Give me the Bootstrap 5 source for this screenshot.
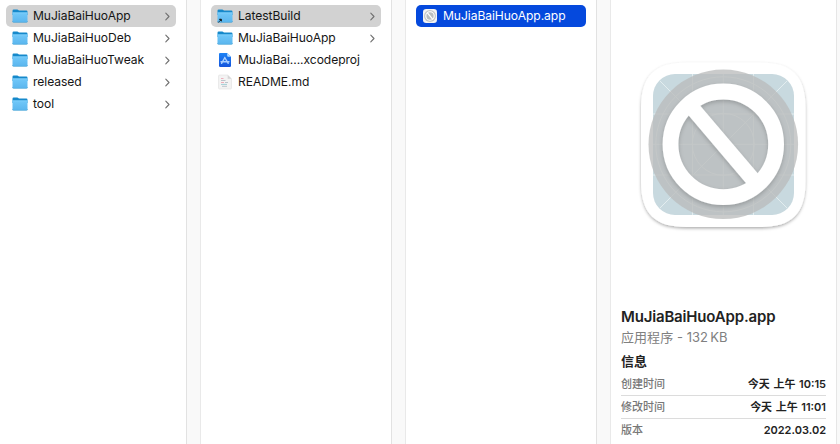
<!DOCTYPE html>
<html lang="zh-CN">
<head>
<meta charset="utf-8">
<meta name="viewport" content="width=device-width, initial-scale=1">
<title>MuJiaBaiHuoApp</title>
<link href="https://cdn.jsdelivr.net/npm/bootstrap@5.3.0/dist/css/bootstrap.min.css" rel="stylesheet">
<style>
body { font-family: Inter, "Noto Sans CJK SC", sans-serif; font-size: 13px; color: #222; background: #fff; }
.browser { height: 444px; width: 840px; }
.pane { background: #fff; width: 190px; padding-top: 5px; }
.pane-first { width: 186px; }
.pane-info { width: 225px; padding: 0 10px; }
.gutter { width: 15px; background: #f9f9f9; border-left: 1px solid #e2e2e2; border-right: 1px solid #e9e9e9; }
.edge { background: #f9f9f9; border-left: 1px solid #e6e6e6; }
.entry { width: 170px; height: 22px; color: #151515; font-size: 12.1px; line-height: 22px; margin-left: 10px; padding: 0 6px 0 5px; border-radius: 5px; letter-spacing: -.06px; white-space: nowrap; }
.pane-first .entry { margin-left: 6px; }
.entry.picked { background: #d2d2d2; }
.entry.active-file { background: #0549dd; color: #fff; }
.entry .glyph { width: 18px; height: 18px; margin-right: 4px; }
.chev { width: 6px; height: 9px; }
.preview { width: 190px; height: 190px; margin: 50px 0 0 9px; }
.file-name { font-size: 15px; font-weight: 600; line-height: 20px; margin-top: 67px; letter-spacing: -.17px; }
.file-kind { color: #808080; line-height: 20px; letter-spacing: .05px; }
.info-head { font-size: 13px; font-weight: 700; line-height: 20px; margin-top: 4px; }
.info-list { margin-top: 2px; }
.info-row { font-size: 11px; line-height: 22px; height: 23px; border-bottom: 1px solid #dcdcdc; }
.info-row:last-child { border: 0; }
.info-row dt { font-weight: 500; color: #777; }
.info-row dd { font-weight: 600; word-spacing: .8px; }
</style>
</head>
<body class="m-0 overflow-hidden">
<svg width="0" height="0" class="position-absolute" aria-hidden="true">
  <defs>
    <linearGradient id="folderFill" x2="0" y2="1"><stop stop-color="#71c8f9"/><stop offset="1" stop-color="#5bb6ee"/></linearGradient>
    <linearGradient id="projFill" x2="0" y2="1"><stop stop-color="#1d82f5"/><stop offset="1" stop-color="#1455dc"/></linearGradient>
    <filter id="softShadow" x="-10%" y="-10%" width="120%" height="125%"><feDropShadow dx="0" dy="1.5" stdDeviation="1.5" flood-opacity=".32"/></filter>
    <filter id="ringShadow" x="-10%" y="-10%" width="120%" height="125%"><feDropShadow dx="0" dy="2" stdDeviation="2" flood-opacity=".2"/></filter>
    <clipPath id="tileClip"><rect x="23" y="24" width="141" height="141" rx="22"/></clipPath>
    <symbol id="folder" viewBox="0 0 18 18">
      <path d="M1.500 3.700q0-1.200 1.200-1.200h3.600q.6 0 1 .5l.6.6h7.400q1.200 0 1.200 1.200V8h-15z" fill="#1689cb"/>
      <path d="M1.500 5.500h15v8.700q0 1-1 1h-13q-1 0-1-1z" fill="url(#folderFill)"/>
      <path d="M1.500 5.800h15" stroke="#91d8ff" stroke-width=".6"/>
      <path d="M1.500 14.200q0 1.200 1 1.200h13q1 0 1-1.200" fill="none" stroke="#3d9dd4" stroke-width=".6"/>
    </symbol>
    <symbol id="chevron" viewBox="0 0 6 9"><path d="M1.800 1.200l3.200 3.300-3.200 3.300" fill="none" stroke="#707070" stroke-width="1.100" stroke-linecap="round" stroke-linejoin="round"/></symbol>
  </defs>
</svg>

<main class="browser d-flex">
  <section class="pane pane-first flex-shrink-0">
    <div class="entry picked d-flex align-items-center"><svg class="glyph"><use href="#folder"/></svg><span>MuJiaBaiHuoApp</span><svg class="chev ms-auto"><use href="#chevron"/></svg></div>
    <div class="entry d-flex align-items-center"><svg class="glyph"><use href="#folder"/></svg><span>MuJiaBaiHuoDeb</span><svg class="chev ms-auto"><use href="#chevron"/></svg></div>
    <div class="entry d-flex align-items-center"><svg class="glyph"><use href="#folder"/></svg><span>MuJiaBaiHuoTweak</span><svg class="chev ms-auto"><use href="#chevron"/></svg></div>
    <div class="entry d-flex align-items-center"><svg class="glyph"><use href="#folder"/></svg><span>released</span><svg class="chev ms-auto"><use href="#chevron"/></svg></div>
    <div class="entry d-flex align-items-center"><svg class="glyph"><use href="#folder"/></svg><span>tool</span><svg class="chev ms-auto"><use href="#chevron"/></svg></div>
  </section>
  <div class="gutter flex-shrink-0"></div>
  <section class="pane flex-shrink-0">
    <div class="entry picked d-flex align-items-center"><svg class="glyph" viewBox="0 0 18 18"><use href="#folder" width="18" height="18"/><path d="M2.200 15.600L5 12.700M3.400 12.200h2v2z" fill="#111" stroke="#111" stroke-width=".8"/></svg><span>LatestBuild</span><svg class="chev ms-auto"><use href="#chevron"/></svg></div>
    <div class="entry d-flex align-items-center"><svg class="glyph"><use href="#folder"/></svg><span>MuJiaBaiHuoApp</span><svg class="chev ms-auto"><use href="#chevron"/></svg></div>
    <div class="entry d-flex align-items-center"><svg class="glyph" viewBox="0 0 18 18"><path d="M4 2h7.200L15 5.800v9q0 1.200-1.200 1.200H4.200Q3 16 3 14.800V3q0-1 1-1z" fill="url(#projFill)"/><path d="M11.200 2L15 5.800h-2.800q-1 0-1-1z" fill="#b5dcff"/><path d="M8.900 6.500l-3.300 5.800M8.700 6.500l3.500 5.800M5 10.800h8" stroke="#a9cfff" stroke-width="1.400" stroke-linecap="round"/></svg><span>MuJiaBai....xcodeproj</span></div>
    <div class="entry d-flex align-items-center"><svg class="glyph" viewBox="0 0 18 18"><path d="M3.500 2h8.200L15.500 5.800V15q0 1-1 1h-11q-1 0-1-1V3q0-1 1-1z" fill="#f3f3f3" stroke="#dadada" stroke-width=".5"/><path d="M11.700 2v3.800h3.800z" fill="#d5d5d5"/><path d="M5 5.500h2.500M5 9.500h3" stroke="#ecaebb"/><path d="M5 7.500h4.500M9 9.500h3M6 13.300h5" stroke="#bcc4cb"/><path d="M5 11.400h6" stroke="#a3ced6"/></svg><span>README.md</span></div>
  </section>
  <div class="gutter flex-shrink-0"></div>
  <section class="pane flex-shrink-0">
    <div class="entry active-file d-flex align-items-center"><svg class="glyph" viewBox="0 0 18 18"><rect x="2" y="2" width="14" height="14" rx="3.200" fill="#f4f4f4"/><circle cx="9" cy="9" r="6" fill="#c4c7c8"/><circle cx="9" cy="9" r="4.200" fill="#b9bebf" stroke="#fff" stroke-width="1.100"/><path d="M6.200 5.700l5.600 6.600" stroke="#fff" stroke-width="1.300"/></svg><span>MuJiaBaiHuoApp.app</span></div>
  </section>
  <div class="gutter flex-shrink-0"></div>
  <section class="pane pane-info flex-shrink-0">
    <svg class="preview d-block" viewBox="0 0 190 190">
      <path filter="url(#softShadow)" fill="#fff" d="M11 58C11 26 24.500 12.500 56.500 12.500H130C162 12.500 175.500 26 175.500 58V131.500C175.500 163.500 162 177 130 177H56.500C24.500 177 11 163.500 11 131.500Z"/>
      <rect x="23" y="24" width="141" height="141" rx="22" fill="#c8d9df"/>
      <g clip-path="url(#tileClip)" fill="none" stroke="#e3edef" stroke-width="1">
        <path d="M62.500 24v141M93.300 24v141M123.500 24v141M23 64h141M23 94.300h141M23 125h141M23 24l141 141M164 24L23 165"/>
        <circle cx="93.300" cy="94.300" r="31"/><circle cx="93.300" cy="94.300" r="67.500"/>
      </g>
      <circle cx="93.300" cy="94.300" r="74.800" fill="#b9babb" fill-opacity=".76"/>
      <g filter="url(#ringShadow)" fill="none" stroke="#fff">
        <circle cx="93.300" cy="94.300" r="52.800" stroke-width="15.800"/>
        <path d="M61.500 57.200L125.100 132" stroke-width="15.200"/>
      </g>
    </svg>
    <h1 class="file-name mb-0">MuJiaBaiHuoApp.app</h1>
    <div class="file-kind">应用程序 - 132&#8198;KB</div>
    <h2 class="info-head mb-0">信息</h2>
    <dl class="info-list mb-0">
      <div class="info-row d-flex justify-content-between"><dt>创建时间</dt><dd class="mb-0">今天 上午 10:15</dd></div>
      <div class="info-row d-flex justify-content-between"><dt>修改时间</dt><dd class="mb-0">今天 上午 11:01</dd></div>
      <div class="info-row d-flex justify-content-between"><dt>版本</dt><dd class="mb-0">2022.03.02</dd></div>
    </dl>
  </section>
  <div class="edge flex-fill"></div>
</main>
<script src="https://cdn.jsdelivr.net/npm/bootstrap@5.3.0/dist/js/bootstrap.bundle.min.js"></script>
</body>
</html>
